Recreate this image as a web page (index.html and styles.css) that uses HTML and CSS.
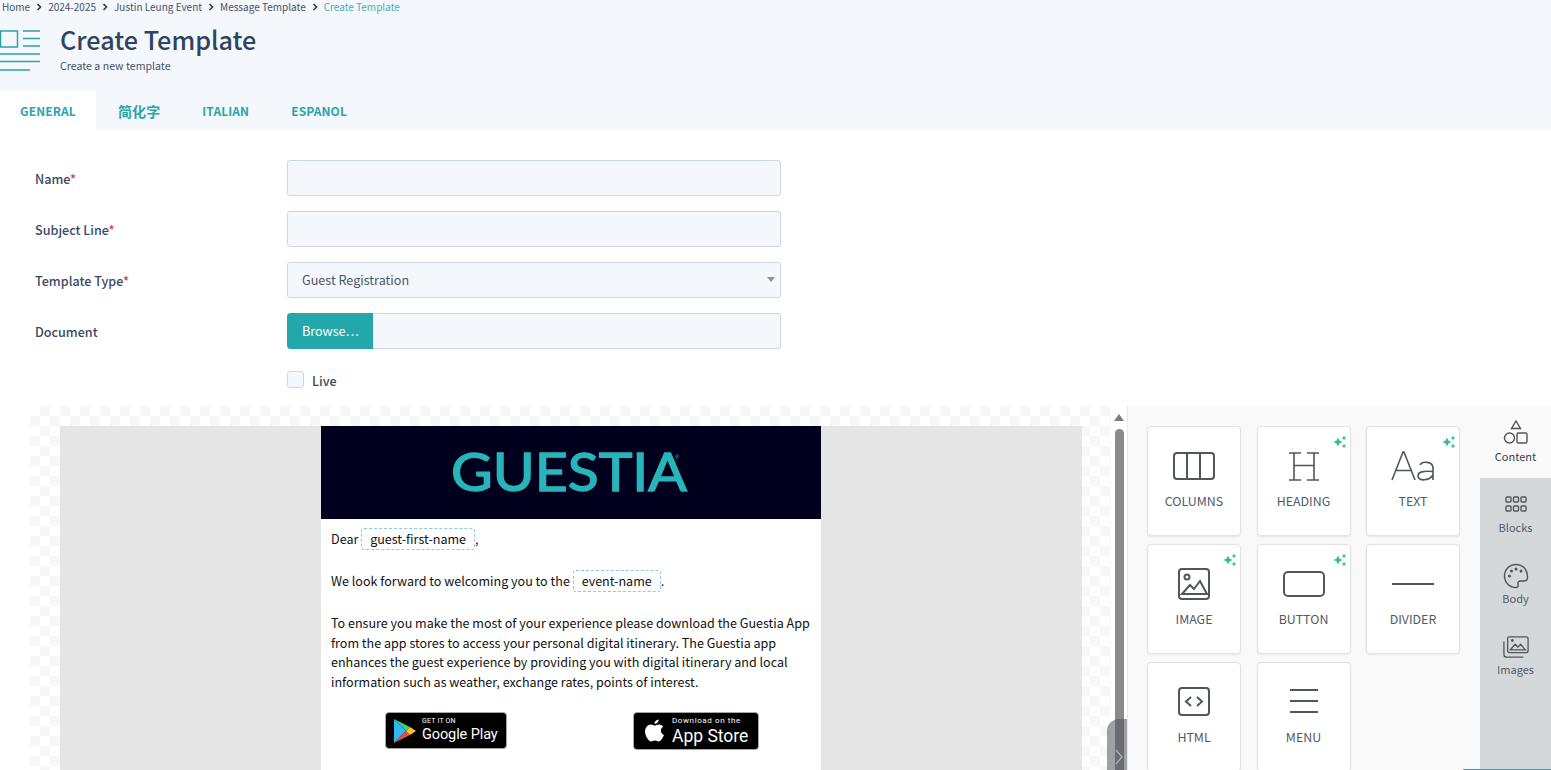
FILE: index.html
```html
<!DOCTYPE html>
<html lang="en">
<head>
<meta charset="utf-8">
<title>Create Template</title>
<link rel="stylesheet" href="styles.css">
</head>
<body>
<header class="top">
  <nav class="crumbs">
    <span>Home</span><svg class="sep" viewBox="0 0 6 8"><path d="M1.5 1l3 3-3 3"/></svg>
    <span>2024-2025</span><svg class="sep" viewBox="0 0 6 8"><path d="M1.5 1l3 3-3 3"/></svg>
    <span>Justin Leung Event</span><svg class="sep" viewBox="0 0 6 8"><path d="M1.5 1l3 3-3 3"/></svg>
    <span>Message Template</span><svg class="sep" viewBox="0 0 6 8"><path d="M1.5 1l3 3-3 3"/></svg>
    <span class="current">Create Template</span>
  </nav>
  <div class="heading">
    <svg class="page-icon" viewBox="0 0 40 41">
      <rect x="0.5" y="1" width="17" height="16"/>
      <path d="M23 1h17M23 8.500h17M23 16h17M0 24h40M0 31.500h40M0 40h30"/>
    </svg>
    <div>
      <h1>Create Template</h1>
      <p>Create a new template</p>
    </div>
  </div>
  <div class="tabs">
    <a class="tab active">GENERAL</a>
    <a class="tab cjk">简化字</a>
    <a class="tab">ITALIAN</a>
    <a class="tab">ESPANOL</a>
  </div>
</header>

<form class="form">
  <label class="row"><span class="lbl">Name<em>*</em></span><span class="field"></span></label>
  <label class="row"><span class="lbl">Subject Line<em>*</em></span><span class="field"></span></label>
  <label class="row"><span class="lbl">Template Type<em>*</em></span><span class="field select">Guest Registration<i class="caret"></i></span></label>
  <label class="row"><span class="lbl">Document</span><span class="field file"><b>Browse…</b></span></label>
  <label class="live"><span class="check"></span><span>Live</span></label>
</form>

<section class="editor">
  <div class="canvas">
    <div class="stage">
      <article class="email">
        <div class="banner">
          <svg class="logo" viewBox="0 0 260 70"><text class="word" x="10" y="53" textLength="236" lengthAdjust="spacingAndGlyphs">GUESTIA</text><text class="reg" x="234" y="21">®</text></svg>
        </div>
        <div class="copy">
          <p class="line">Dear <span class="chip">guest-first-name</span>,</p>
          <p class="line">We look forward to welcoming you to the <span class="chip">event-name</span>.</p>
          <p>To ensure you make the most of your experience please download the Guestia App from the app stores to access your personal digital itinerary. The Guestia app enhances the guest experience by providing you with digital itinerary and local information such as weather, exchange rates, points of interest.</p>
        </div>
        <div class="badges">
          <div class="badge gp">
            <svg viewBox="0 0 22 24" class="play">
              <path d="M0 0v24l12-12z" fill="#2fb9f0"/>
              <path d="M0 0l12 12 4-4z" fill="#35d07f"/>
              <path d="M0 24l12-12 4 4z" fill="#ea4b4b"/>
              <path d="M16 8l6 4-6 4-4-4z" fill="#fbc02d"/>
            </svg>
            <div class="bt"><small>GET IT ON</small><strong>Google Play</strong></div>
          </div>
          <div class="badge as">
            <svg viewBox="0 0 20 24" class="apple">
              <path fill="#fff" d="M14 1c.2 1.900-1.700 4.300-4 4.200C9.800 3.200 11.800 1.100 14 1zM10.200 6.700c1 0 2.300-1.100 4.200-1 1.600.1 3 .8 3.900 2.100-3.300 2-2.800 6.600.7 8-.8 2.300-2.900 6.200-5 6.200-1.200 0-1.900-.9-3.500-.9s-2.400.9-3.600.9C4.300 22 1 16.600 1 12.500c0-4 2.600-6.700 5.500-6.800 1.600 0 2.900 1 3.700 1z"/>
            </svg>
            <div class="bt"><small class="dl">Download on the</small><strong class="st">App Store</strong></div>
          </div>
        </div>
      </article>
    </div>
  </div>

  <div class="scroll"><i class="up"></i><i class="thumb"></i></div>

  <aside class="panel">
    <svg class="defs" width="0" height="0"><symbol id="spark" viewBox="0 0 14 14"><path d="M5 2.500l1.400 3.100L9.500 7 6.400 8.400 5 11.500 3.600 8.400.5 7l3.100-1.400zM11 .5l.8 1.700 1.700.8-1.700.8-.8 1.700-.8-1.700L8.500 3l1.700-.8zM11 8.500l.8 1.700 1.700.8-1.700.8-.8 1.700-.8-1.700-1.700-.8 1.700-.8z"/></symbol></svg>
    <div class="cards">
      <div class="card"><svg viewBox="0 0 44 32"><rect x="2" y="3" width="40" height="26" rx="3"/><path d="M15 3v26M28 3v26"/></svg><span>COLUMNS</span></div>
      <div class="card"><svg class="sparkle"><use href="#spark"/></svg><svg viewBox="0 0 44 32" class="thin"><path d="M7 3h12M25 3h12M12 3v27M32 3v27M12 15.500h20M7 30h12M25 30h12"/></svg><span>HEADING</span></div>
      <div class="card"><svg class="sparkle"><use href="#spark"/></svg><svg viewBox="0 0 44 32" class="thin"><path d="M1 30L12 2h1l11 28M5 20.500h16M42 30V18c0-7-11-7-13-3M42 21.500c-10-1-15 .5-15 4.500 0 5.500 11 5 15-1"/></svg><span>TEXT</span></div>
      <div class="card"><svg class="sparkle"><use href="#spark"/></svg><svg viewBox="0 0 44 32"><rect x="7" y="1" width="30" height="30" rx="3"/><circle cx="15" cy="9" r="2.500"/><path d="M10 26l8-9 4 4 6-8 7 13z"/></svg><span>IMAGE</span></div>
      <div class="card"><svg class="sparkle"><use href="#spark"/></svg><svg viewBox="0 0 44 32"><rect x="2" y="4" width="40" height="24" rx="4"/></svg><span>BUTTON</span></div>
      <div class="card"><svg viewBox="0 0 44 32"><path d="M1 16h42"/></svg><span>DIVIDER</span></div>
      <div class="card"><svg viewBox="0 0 44 32"><rect x="7" y="2" width="30" height="27" rx="3"/><path d="M19 11l-5 4.500 5 4.500M25 11l5 4.500-5 4.500"/></svg><span>HTML</span></div>
      <div class="card"><svg viewBox="0 0 44 32" class="thin2"><path d="M8 4h28M8 15h28M8 26h28"/></svg><span>MENU</span></div>
    </div>
  </aside>

  <nav class="side">
    <div class="side-tab on">
      <svg viewBox="0 0 26 26"><path d="M13 1l4.500 7.500h-9z"/><circle cx="6.500" cy="18" r="5"/><rect x="14" y="13" width="10" height="10" rx="1.500"/></svg>
      <span>Content</span>
    </div>
    <div class="side-tab">
      <svg viewBox="0 0 26 26"><g><rect x="3" y="5" width="5" height="5" rx="1"/><rect x="10.500" y="5" width="5" height="5" rx="1"/><rect x="18" y="5" width="5" height="5" rx="1"/><rect x="3" y="14" width="5" height="5" rx="1"/><rect x="10.500" y="14" width="5" height="5" rx="1"/><rect x="18" y="14" width="5" height="5" rx="1"/></g></svg>
      <span>Blocks</span>
    </div>
    <div class="side-tab">
      <svg viewBox="0 0 26 26"><path d="M13 1.500C6.500 1.500 1.500 6.500 1.500 13S6.500 24.500 13 24.500c2 0 2.500-1.500 2-3-.6-1.800.5-3.500 2.500-3.500h3.500c2 0 3.500-1.500 3.500-3.500C24.500 6 19.500 1.500 13 1.500z"/><circle cx="6.500" cy="13" r=".8"/><circle cx="8.500" cy="8" r=".8"/><circle cx="13" cy="6" r=".8"/><circle cx="18" cy="8" r=".8"/></svg>
      <span>Body</span>
    </div>
    <div class="side-tab">
      <svg viewBox="0 0 28 24"><rect x="5" y="1" width="22" height="17" rx="2"/><path d="M1 6v14c0 1.500 1 3 3 3h18"/><circle cx="10" cy="5" r=".8"/><path d="M8 15l5-6 3 3 3-3 5 6z"/></svg>
      <span>Images</span>
    </div>
  </nav>

  <div class="handle"><svg viewBox="0 0 8 16"><path d="M1 1l6 7-6 7"/></svg></div>
  <i class="peek"></i>
</section>
</body>
</html>
```
FILE: styles.css
```css
* { box-sizing: border-box; }
html, body { margin: 0; height: 770px; overflow: hidden; background: #fff; }
body {
  font-family: "Noto Sans CJK SC", "Noto Sans", sans-serif;
  font-size: 12.550px;
  color: #3b4a63;
  width: 1551px;
}
p, h1 { margin: 0; }

.top { background: #f4f7fb; height: 130px; display: flex; flex-direction: column; }
.crumbs { display: flex; align-items: center; height: 14px; padding-left: 2px; font-size: 10px; line-height: 14px; color: #46536b; }
.crumbs .sep { width: 6px; height: 8px; margin: 0 6px; fill: none; stroke: #2d3a52; stroke-width: 1.600; }
.crumbs .current { color: #45b2b4; }

.heading { display: flex; gap: 20px; margin-top: 16px; height: 61px; }
.page-icon { width: 40px; height: 41px; flex: none; fill: none; stroke: #2aa3a8; stroke-width: 1.500; }
.heading h1 { font-size: 25.200px; line-height: 20px; font-weight: 500; color: #2e4460; margin-top: -1px; }
.heading p { font-size: 10.600px; line-height: 14px; margin-top: 10px; color: #46536b; }

.tabs { display: flex; height: 39px; }
.tab { display: flex; align-items: center; padding: 0 21px; font-size: 12px; font-weight: 700; color: #2ba5a8; letter-spacing: .1px; }
.tab.active { background: #fff; width: 96px; padding: 0 20px; }
.tab.cjk { font-size: 14px; padding: 0 21px 0 22px; }

.form { padding: 30px 0 0 35px; height: 276px; }
.row { display: flex; align-items: center; margin-bottom: 15px; height: 36px; }
.lbl { width: 252px; font-size: 12.600px; font-weight: 500; color: #3b4a63; }
.lbl em { color: #e03a4a; font-style: normal; }
.field { width: 494px; height: 36px; background: #f4f7fb; border: 1px solid #cdd7e3; border-radius: 3px; display: flex; align-items: center; padding: 0 0 1px 14px; font-size: 12.600px; color: #4b566a; position: relative; }
.caret { position: absolute; right: 5px; top: 14px; border: 4.500px solid transparent; border-top: 5.500px solid #8a93a0; border-bottom: 0; }
.file { padding: 0; overflow: visible; }
.file b { display: flex; align-items: center; height: 36px; margin-left: -1px; padding: 0 15px 2px; background: #23a7a9; color: #fff; font-weight: 400; font-size: 12.600px; width: 86px; border-radius: 4px 0 0 4px; }
.live { display: flex; align-items: center; margin: 21px 0 0 252px; gap: 8px; font-size: 12.600px; font-weight: 500; height: 20px; }
.check { width: 17px; height: 17px; margin-top: -1px; background: #f4f7fb; border: 1px solid #cdd7e3; border-radius: 3px; }

.editor { position: relative; display: flex; margin-left: 30px; height: 364px; overflow: hidden; }
.canvas { width: 1081px; flex: none; padding: 20px 29px 0 30px; background: conic-gradient(#f7f7f7 25%, #fff 0 50%, #f7f7f7 0 75%, #fff 0) 0 0 / 20px 20px; }
.stage { background: #e5e5e5; height: 344px; width: 1022px; display: flex; justify-content: center; margin-right: -1px; }
.email { width: 500px; height: 344px; background: #fff; color: #111; overflow: hidden; }
.banner { height: 93px; background: #00001e; display: flex; align-items: center; justify-content: center; }
.logo { width: 260px; height: 70px; flex: none; }
.logo .word { font-family: Lato, sans-serif; font-size: 52px; font-weight: 400; fill: #27b5b8; stroke: #27b5b8; stroke-width: 1.400; }
.logo .reg { font-family: "Liberation Sans", sans-serif; font-size: 6px; fill: #27b5b8; }
.copy { padding: 10px 10px 0; line-height: 19.600px; }
.copy p { margin: 0; }
.copy .line { margin-bottom: 22.400px; }
.chip { display: inline-block; border: 1px dashed #8cc8ea; border-radius: 3px; padding: 0 8px; line-height: 20px; margin: -1px 0 -3px; }

.badges { height: 60px; margin-top: 21px; display: flex; }
.badge { display: flex; align-items: center; height: 37px; background: #000; border: 1px solid #a6a6a6; border-radius: 4px; color: #fff; }
.badge.gp { width: 122px; margin-left: 64px; padding-left: 8px; gap: 6px; }
.badge.as { width: 126px; margin-left: 126px; padding-left: 10px; gap: 7px; height: 38px; }
.play { width: 22px; height: 24px; flex: none; }
.apple { width: 21px; height: 26px; flex: none; }
.bt { display: flex; flex-direction: column; white-space: nowrap; font-family: Roboto, sans-serif; }
.bt small { font-size: 7px; line-height: 9px; letter-spacing: .2px; }
.bt strong { font-size: 14.500px; line-height: 18px; font-weight: 400; letter-spacing: -.1px; }
.bt .dl { font-size: 8px; line-height: 10px; letter-spacing: .6px; }
.bt .st { font-size: 17.500px; line-height: 20px; letter-spacing: 0; }

.scroll { width: 16px; flex: none; background: #fff; position: relative; }
.scroll .up { position: absolute; left: 3px; top: 8px; border: 5px solid transparent; border-bottom: 7px solid #7d7d7d; border-top: 0; }
.scroll .thumb { position: absolute; left: 4px; top: 23px; bottom: 0; width: 9px; background: #8a8a8a; border-radius: 5px 5px 0 0; }

.panel { width: 353px; flex: none; background: #f9f9f9; border-left: 1px solid #e8e8e8; padding: 20px 0 0 19px; }
.defs { position: absolute; }
.cards { display: grid; grid-template-columns: 94px 94px 94px; grid-auto-rows: 110px; column-gap: 15.500px; row-gap: 8px; }
.card { position: relative; display: flex; flex-direction: column; align-items: center; padding-top: 23px; background: #fff; border: 1px solid #e3e3e3; border-radius: 4px; box-shadow: 0 1px 2px rgba(0,0,0,.08); font-size: 12.400px; line-height: 18px; color: #505a66; }
.card svg { width: 44px; height: 32px; fill: none; stroke: #505659; stroke-width: 2; margin-bottom: 10px; }
.card svg.thin { stroke-width: 1.600; }
.card svg.sparkle { position: absolute; top: 8px; right: 3px; width: 14px; height: 14px; margin: 0; fill: #2fbf93; stroke: none; }
.side { width: 71px; flex: none; background: #d5d8db; }
.side-tab { height: 71px; display: flex; flex-direction: column; align-items: center; padding-top: 14px; font-size: 11px; line-height: 16px; color: #505a66; }
.side-tab.on { background: #f9f9f9; height: 72px; color: #3a424c; }
.side-tab svg { width: 26px; height: 26px; fill: none; stroke: #505659; stroke-width: 1.400; margin-bottom: 1px; }
.side-tab.on svg { margin-bottom: 2px; }

.handle { position: absolute; left: 1077px; bottom: 0; width: 20px; height: 51px; background: rgba(80,84,92,.55); border-radius: 12px 0 0 0; display: flex; align-items: flex-end; padding: 0 0 5px 8px; }
.handle svg { width: 8px; height: 16px; fill: none; stroke: #aeb3b8; stroke-width: 1.200; }
.peek { position: absolute; right: 0; bottom: 0; width: 88px; height: 1px; background: #23a7a9; border-radius: 3px 0 0 0; }
```
